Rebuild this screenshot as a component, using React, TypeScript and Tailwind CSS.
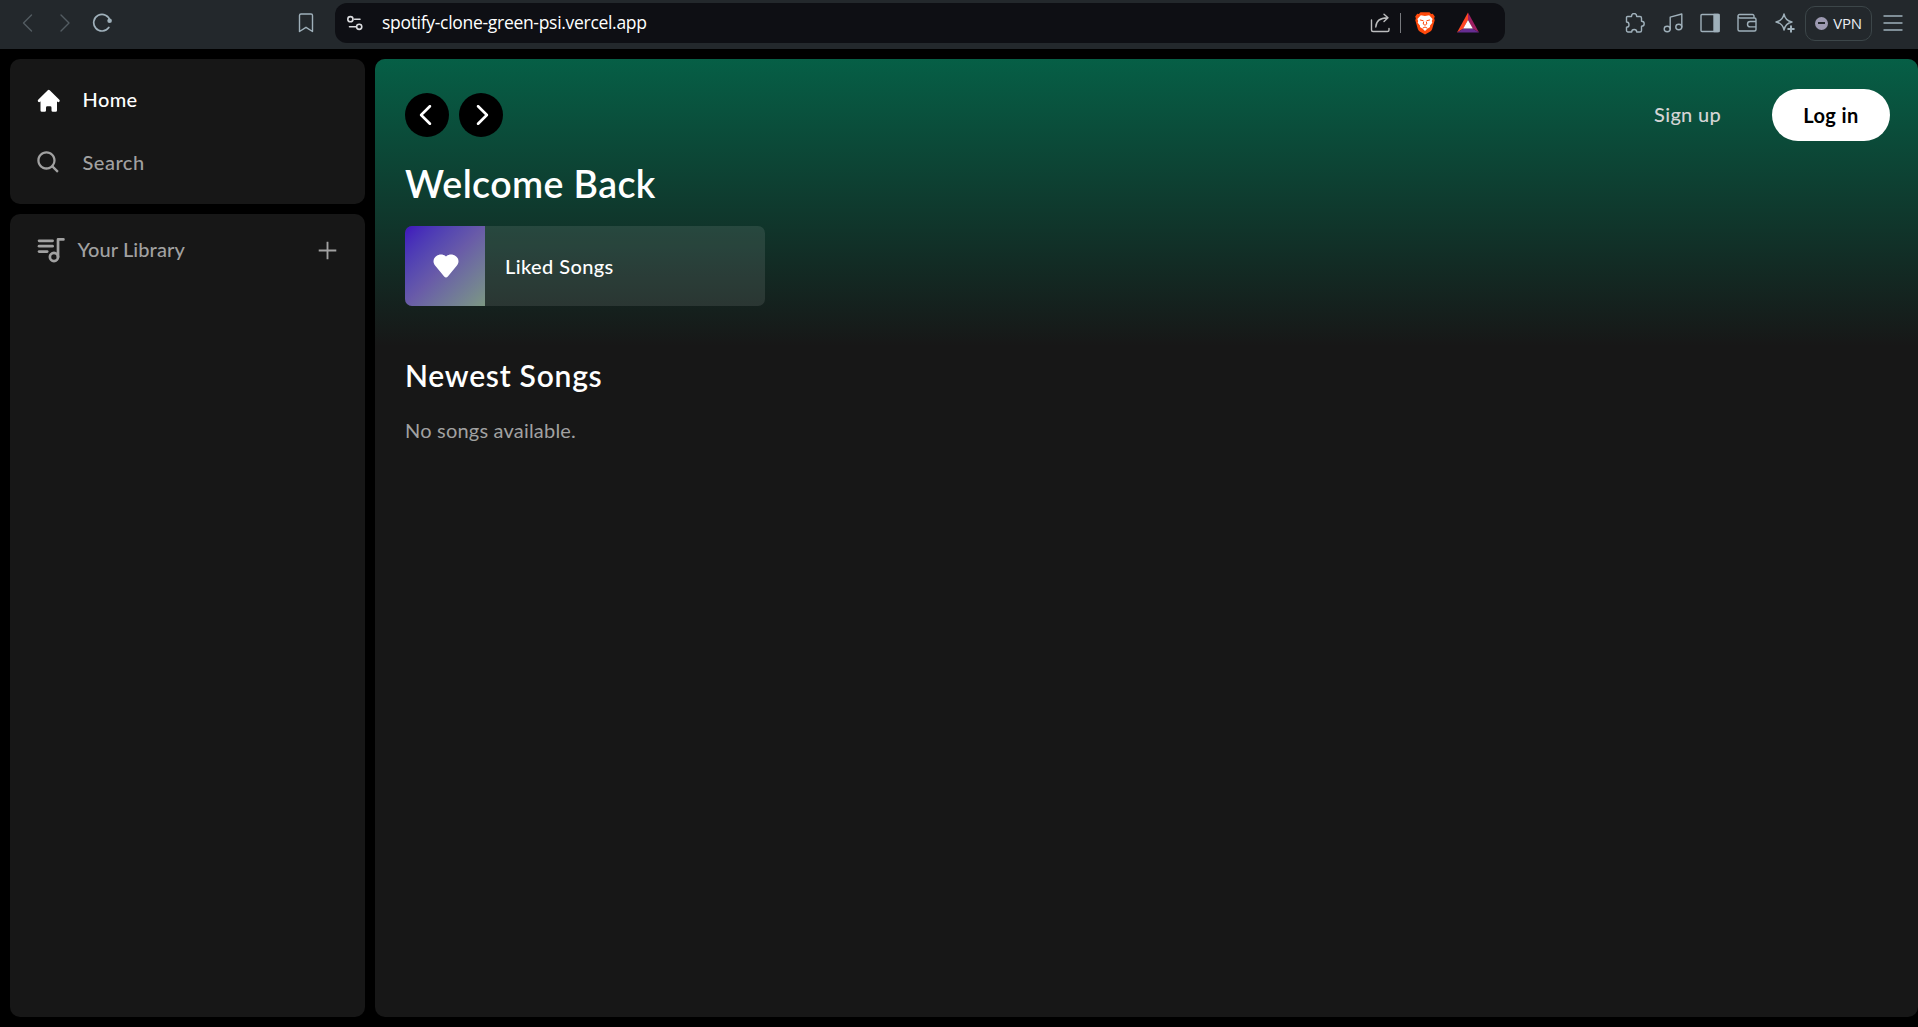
import type { ReactNode } from "react";
import { HiHome } from "react-icons/hi";
import { BiSearch } from "react-icons/bi";
import { TbPlaylist } from "react-icons/tb";
import { AiOutlinePlus } from "react-icons/ai";
import { RxCaretLeft, RxCaretRight } from "react-icons/rx";

function Icon({ children, className = "", size = 20 }: { children: ReactNode; className?: string; size?: number }) {
  return (
    <svg
      width={size}
      height={size}
      viewBox={`0 0 ${size} ${size}`}
      fill="none"
      stroke="currentColor"
      strokeWidth="1.4"
      strokeLinecap="round"
      strokeLinejoin="round"
      className={`block shrink-0 ${className}`}
    >
      {children}
    </svg>
  );
}

function Shield() {
  return (
    <Icon size={24} className="ml-[12px]">
      <path d="M7.5 1.2h9l1.6 1.7 1.7-.1 2 2.6-.7 1.9.6 2-2.6 8.9c-.3 1-1 1.700-1.800 2.300L12 23.400l-5.300-2.900c-.8-.6-1.500-1.300-1.800-2.300L2.300 9.300l.6-2-.7-1.900 2-2.600 1.700.1z" fill="#ff4a0c" stroke="none" />
      <path d="M7.800 4.300 12 5.100l4.200-.8 3.400 3.800-.8 1.800.5 1.800-2.400 3 .2 1.400-2.800 1.700L12 20l-2.300-2.200-2.800-1.700.2-1.400-2.400-3 .5-1.800-.8-1.800z" fill="#fff" stroke="none" />
      <path d="m7.300 9 2.800.7M16.700 9l-2.800.7M10.600 11l-.4 2 1.800 1.300 1.800-1.300-.4-2M10 17l2-1 2 1" stroke="#ff4a0c" strokeWidth="1" />
    </Icon>
  );
}

function BrowserBar() {
  return (
    <header className="flex h-[49px] shrink-0 items-center bg-[#23282c] pb-[3px] text-[#9fb0ba]">
      <Icon className="ml-[17px] text-[#535c62]"><path d="m14.500 2-8 8 8 8" /></Icon>
      <Icon className="ml-[18px] text-[#535c62]"><path d="m6 2 8 8-8 8" /></Icon>
      <Icon className="ml-[17px]">
        <path d="M16.800 14.500a8.300 8.300 0 1 1 1.300-6.700" strokeWidth="1.700" />
        <circle cx="17.600" cy="7.800" r="2.300" fill="currentColor" stroke="none" />
      </Icon>
      <Icon className="ml-[184px]"><path d="M5 1h10a1.500 1.500 0 0 1 1.500 1.500v16L10 14.300 3.500 18.500v-16A1.500 1.500 0 0 1 5 1z" /></Icon>
      <div className="ml-[19px] flex h-10 w-[1170px] items-center rounded-xl bg-[#0e0f14] text-[#dadbde]">
        <Icon className="ml-[10px]">
          <circle cx="5.400" cy="6.200" r="2.600" strokeWidth="1.600" /><path d="M9.500 6.200H15M4.500 13.800H11" strokeWidth="1.600" />
          <circle cx="14.200" cy="13.800" r="2.600" strokeWidth="1.600" />
        </Icon>
        <span className="ml-[17px] whitespace-nowrap pb-px font-['Open_Sans',sans-serif] text-[17.5px] tracking-[-0.3px] text-white">
          spotify-clone-green-psi.vercel.app
        </span>
        <Icon className="ml-auto text-[#bcbdbe]">
          <path d="M1.500 7v10a1.500 1.500 0 0 0 1.500 1.500h14.500a1.500 1.500 0 0 0 1.500-1.500v-1.500M5.800 14c.2-5 3.700-9 11.700-9.200M14 1.200l4 3.600-4 3.800" />
        </Icon>
        <div className="ml-[10px] h-5 w-px bg-[#77797d]" />
        <Shield />
        <Icon size={24} className="ml-[19px] mr-[25px]">
          <g stroke="none">
            <path d="M12 1.500 1 21.500 7.500 17.500 12 9z" fill="#ff4724" />
            <path d="M12 1.500 23 21.500l-6.500-4L12 9z" fill="#9e1f63" />
            <path d="M1 21.500h22l-6.500-4h-9z" fill="#662d91" />
            <path d="m12 9 4.800 8.500H7.200z" fill="#fff" />
          </g>
        </Icon>
      </div>
      <Icon className="ml-[120px]">
        <path d="M2.500 3.500h4c0-2 1-3 2.500-3s2.700 1 2.700 3h3.300A1.500 1.500 0 0 1 16.500 5v3.200c1.700 0 2.700 1 2.700 2.500s-1 2.500-2.700 2.500v4.300a1.500 1.500 0 0 1-1.500 1.500h-3.300c0-1.500-1-2.500-2.500-2.500S6.700 17.500 6.700 19H3a1.500 1.500 0 0 1-1.500-1.500v-3.300c1.700 0 2.500-1 2.500-2.500S3.200 9 1.500 9V4.500a1 1 0 0 1 1-1z" />
      </Icon>
      <Icon className="ml-[18px]">
        <ellipse cx="4.200" cy="16" rx="3" ry="2.700" /><ellipse cx="15.800" cy="14" rx="3" ry="2.700" />
        <path d="M7.200 16V4.200L18.800 1v13" />
      </Icon>
      <Icon className="ml-[17px]">
        <rect x="1" y="1.500" width="18" height="17" rx="1" /><path d="M14 1.500h5v17h-5z" fill="currentColor" />
      </Icon>
      <Icon className="ml-[17px]">
        <path d="M17 4.500V3a1.500 1.500 0 0 0-1.500-1.500h-13A1.500 1.500 0 0 0 1 3v13.500A1.500 1.500 0 0 0 2.500 18h15a1.500 1.500 0 0 0 1.500-1.500V6.500A1.500 1.500 0 0 0 17.500 5H3A2 2 0 0 1 1 3M19 8.500h-5.800a2.700 2.700 0 0 0 0 5.400H19" />
      </Icon>
      <Icon className="ml-[18px]">
        <path d="M9 1c.9 4.800 3 7 8 8-4.800 1-7 3.200-8 8-1-4.800-3.200-7-8-8 4.800-1 7-3.200 8-8z" />
        <path d="M16 13.200v5.600M13.200 16h5.600" strokeWidth="2" />
      </Icon>
      <div className="ml-[10px] flex h-[35px] w-[67px] items-center justify-center gap-[5px] rounded-[10px] border border-[#3c4649]">
        <span className="flex h-[13px] w-[13px] items-center justify-center rounded-full bg-[#9d9ab2]">
          <span className="h-[1.5px] w-[7px] bg-[#23282c]" />
        </span>
        <span className="font-['Open_Sans',sans-serif] text-[15px] leading-5 tracking-[-0.3px] text-[#e9edf2]">VPN</span>
      </div>
      <Icon className="ml-[11px]"><path d="M1 3h18M1 10h18M1 17h18" /></Icon>
    </header>
  );
}

function Sidebar() {
  return (
    <aside className="flex w-[355px] shrink-0 flex-col gap-[10px] text-[20px] font-medium text-neutral-400">
      <nav className="flex h-[145px] shrink-0 flex-col gap-5 rounded-[10px] bg-neutral-900 px-[25px] py-5">
        <a className="flex h-[42.5px] items-center text-white">
          <HiHome size={27.5} />
          <span className="ml-5 pb-[2px] tracking-[0.4px]">Home</span>
        </a>
        <a className="flex h-[42.5px] items-center">
          <BiSearch size={27.5} />
          <span className="ml-5 pb-[2px] tracking-[0.5px]">Search</span>
        </a>
      </nav>
      <section className="flex-1 rounded-[10px] bg-neutral-900 px-[25px] pt-5">
        <div className="flex h-[32.5px] items-center">
          <TbPlaylist size={32.5} />
          <span className="ml-[10px] pb-[2px] tracking-[0.1px]">Your Library</span>
          <AiOutlinePlus size={25} className="ml-auto" />
        </div>
      </section>
    </aside>
  );
}

export default function App() {
  return (
    <div className="flex h-[1027px] w-[1918px] flex-col overflow-hidden bg-black font-['Lato',sans-serif]">
      <BrowserBar />
      <div className="flex min-h-0 flex-1 gap-[10px] py-[10px] pl-[10px]">
        <Sidebar />
        <main className="flex-1 overflow-hidden rounded-[10px] bg-neutral-900 text-white">
          <div className="h-[287px] bg-linear-to-b from-[#065f46] to-[#065f4600] px-[30px] pt-[30px]">
            <div className="flex h-[52px] items-center">
              <button className="flex h-11 w-11 items-center justify-center rounded-full bg-black"><RxCaretLeft size={44} /></button>
              <button className="ml-[10px] flex h-11 w-11 items-center justify-center rounded-full bg-black"><RxCaretRight size={44} /></button>
              <button className="ml-auto mr-[51px] pb-[2px] text-[20px] font-medium tracking-[0.3px] text-neutral-300">Sign up</button>
              <button className="mr-[-2px] h-[52px] w-[118px] rounded-full bg-white pb-px text-[20px] font-bold tracking-[0.4px] text-black">Log in</button>
            </div>
            <h1 className="mt-5 text-[37.5px] font-semibold leading-[45px] tracking-[0.4px]">Welcome Back</h1>
            <div className="mt-5 flex h-20 w-[360px] items-center overflow-hidden rounded-[7px] bg-neutral-100/10">
              <div className="flex h-20 w-20 items-center justify-center bg-linear-to-br from-[#4010bd] via-[#695ba8] to-[#7c9782]">
                <svg width="26" height="24" viewBox="0 0 28 26" fill="#fff" className="ml-[2px]">
                  <path d="M14 2.600C10-1.200 3.700.4 1.300 4.600c-1.500 3-.9 6 1.100 8.200l9.600 11.700c1.200 1.400 2.800 1.400 4 0l9.600-11.700c2-2.200 2.600-5.200 1.100-8.200C24.300.4 18-1.200 14 2.600z" />
                </svg>
              </div>
              <span className="ml-5 pb-px text-[20px] font-medium tracking-[0.4px]">Liked Songs</span>
            </div>
          </div>
          <div className="px-[30px] pt-[9px]">
            <h2 className="text-[30px] font-semibold leading-10 tracking-[0.75px]">Newest Songs</h2>
            <p className="mt-5 text-[20px] leading-[30px] tracking-[0.2px] text-neutral-400">No songs available.</p>
          </div>
        </main>
      </div>
    </div>
  );
}
